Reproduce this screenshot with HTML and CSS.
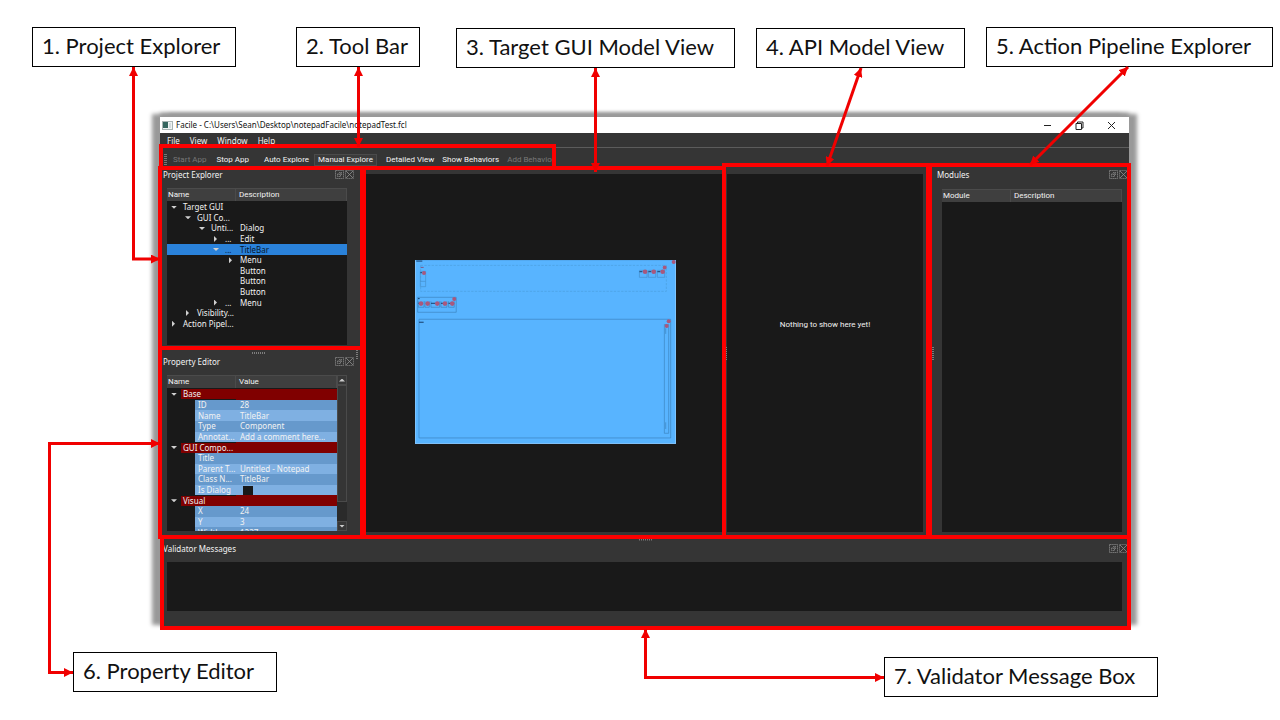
FILE: index.html
```html
<!DOCTYPE html>
<html lang="en">
<head>
<meta charset="utf-8">
<title>Facile window overview</title>
<link rel="stylesheet" href="styles.css">
</head>
<body>
<svg class="symbols" aria-hidden="true">
  <symbol id="float" viewBox="0 0 9 9"><path d="M.5 .5h8v8h-8zM4 2.500h2.500v2.500M2.500 4h3v2.500h-3zM6.500 2.500L4 5" fill="none" stroke="#858585" stroke-width=".8" stroke-dasharray="1.500 .4"/></symbol>
  <symbol id="close" viewBox="0 0 9 9"><path d="M.5 .5h8v8h-8z" fill="none" stroke="#777" stroke-width=".8" stroke-dasharray="1.500 .4"/><path d="M1 1l7 7M8 1L1 8" fill="none" stroke="#909090" stroke-width=".8"/></symbol>
</svg>
<main class="slide">
  <div class="labels top">
    <div class="label l1">1. Project Explorer</div>
    <div class="label l2">2. Tool Bar</div>
    <div class="label l3">3. Target GUI Model View</div>
    <div class="label l4">4. API Model View</div>
    <div class="label l5">5. Action Pipeline Explorer</div>
  </div>

  <section class="window">
    <header class="titlebar">
      <svg class="app-icon" viewBox="0 0 11 9"><rect x=".5" y=".5" width="10" height="8" fill="#eef3f3" stroke="#a9b4b4"/><rect x="1" y="1" width="5" height="6" fill="#35665f"/><path d="M8 2v5" stroke="#b8c2c8"/></svg>
      <h1>Facile - C:\Users\Sean\Desktop\notepadFacile\notepadTest.fcl</h1>
      <div class="controls">
        <button aria-label="Minimize"><svg viewBox="0 0 9 9"><path d="M1 4.500h7"/></svg></button>
        <button aria-label="Restore"><svg viewBox="0 0 9 9"><path d="M1 2.500h5.500v6H1zM2.500 2.500V1H8v6H6.500"/></svg></button>
        <button aria-label="Close"><svg viewBox="0 0 9 9"><path d="M1 1l7 7M8 1L1 8"/></svg></button>
      </div>
    </header>
    <nav class="menubar"><button>File</button><button>View</button><button>Window</button><button>Help</button></nav>
    <div class="toolbar">
      <i class="grip"></i>
      <button disabled>Start App</button><button class="stop">Stop App</button><button>Auto Explore</button><button class="checked">Manual Explore</button><button>Detailed View</button><button>Show Behaviors</button><button disabled>Add Behavior</button>
    </div>
    <div class="body">
      <div class="left">
        <section class="dock">
          <div class="dock-title"><h2>Project Explorer</h2><button aria-label="Float Project Explorer"><svg><use href="#float"/></svg></button><button aria-label="Close Project Explorer"><svg><use href="#close"/></svg></button></div>
          <table class="tree project">
            <thead><tr><th>Name</th><th>Description</th></tr></thead>
            <tbody>
              <tr><td class="d0 open">Target GUI</td><td></td></tr>
              <tr><td class="d1 open">GUI Co...</td><td></td></tr>
              <tr><td class="d2 open">Unti...</td><td>Dialog</td></tr>
              <tr><td class="d3 shut">...</td><td>Edit</td></tr>
              <tr class="selected"><td class="d3 open">...</td><td>TitleBar</td></tr>
              <tr><td class="d4 shut"></td><td>Menu</td></tr>
              <tr><td></td><td>Button</td></tr>
              <tr><td></td><td>Button</td></tr>
              <tr><td></td><td>Button</td></tr>
              <tr><td class="d3 shut">...</td><td>Menu</td></tr>
              <tr><td class="d1 shut">Visibility...</td><td></td></tr>
              <tr><td class="d0 shut">Action Pipel...</td><td></td></tr>
            </tbody>
          </table>
        </section>
        <i class="handle"></i>
        <section class="dock">
          <div class="dock-title"><h2>Property Editor</h2><button aria-label="Float Property Editor"><svg><use href="#float"/></svg></button><button aria-label="Close Property Editor"><svg><use href="#close"/></svg></button></div>
          <div class="property-view">
            <table class="tree properties">
              <thead><tr><th>Name</th><th>Value</th></tr></thead>
              <tbody>
                <tr class="group"><td class="d0 open"><span>Base</span></td><td></td></tr>
                <tr class="a"><td>ID</td><td>28</td></tr>
                <tr class="b"><td>Name</td><td>TitleBar</td></tr>
                <tr class="a"><td>Type</td><td>Component</td></tr>
                <tr class="b"><td>Annotat...</td><td>Add a comment here...</td></tr>
                <tr class="group"><td class="d0 open"><span>GUI Compo...</span></td><td></td></tr>
                <tr class="a"><td>Title</td><td></td></tr>
                <tr class="b"><td>Parent T...</td><td>Untitled - Notepad</td></tr>
                <tr class="a"><td>Class N...</td><td>TitleBar</td></tr>
                <tr class="b"><td><label for="dialog">Is Dialog</label></td><td><input type="checkbox" id="dialog"></td></tr>
                <tr class="group"><td class="d0 open"><span>Visual</span></td><td></td></tr>
                <tr class="a"><td>X</td><td>24</td></tr>
                <tr class="b"><td>Y</td><td>3</td></tr>
                <tr class="a"><td>Width</td><td>1237</td></tr>
              </tbody>
            </table>
            <div class="scrollbar"><button class="up" aria-label="Scroll up"></button><i></i><button class="down" aria-label="Scroll down"></button></div>
          </div>
        </section>
      </div>
      <section class="view model">
        <svg viewBox="0 0 785 553" role="img" aria-label="Target GUI model">
          <rect width="785" height="553" fill="#58b4ff"/>
          <path d="M1 0v552h783V0" fill="none" stroke="#9bd2ff" stroke-width="2"/>
          <g fill="none" stroke="#3b82bd" stroke-width="2">
            <path d="M17 16H756V94H17z" stroke-dasharray="7 4" stroke="#4c9edd"/>
            <path d="M16 34h16v46H16zM16 64h16M675 31h23v21h-23zM702 31h22v21h-22zM729 31h22v21h-22z" stroke="#4590cc"/>
            <path d="M8 112h116v45H8zM10 124v18h17v-18M30 124v18h13v-18M48 124v18h26v-18M78 124v18h18v-18M101 124v18h17v-18"/>
            <path d="M12 178h757v357H12zM750 194h13v327h-13zM754 205v17M754 488v20"/>
          </g>
          <g fill="none" stroke="#173c68" stroke-width="3"><path d="M4 3h18M675 35h9M702 35h9M729 35h9M9 116h5M12 187h14M48 130h13M78 130h7M101 130h7M10 130h5M16 38h5"/></g>
          <path d="M17 22h9" stroke="#805587" stroke-width="3"/>
          <g fill="#a9587d"><circle cx="778" cy="6" r="6"/><circle cx="751" cy="22" r="6"/><circle cx="27" cy="39" r="6"/><circle cx="692" cy="35" r="7"/><circle cx="718" cy="35" r="7"/><circle cx="745" cy="35" r="7"/><circle cx="118" cy="117" r="6"/><circle cx="18" cy="131" r="7"/><circle cx="38" cy="131" r="7"/><circle cx="67" cy="131" r="7"/><circle cx="90" cy="131" r="7"/><circle cx="112" cy="131" r="7"/><circle cx="763" cy="184" r="6"/><circle cx="757" cy="198" r="6"/></g>
        </svg>
      </section>
      <section class="view api"><p>Nothing to show here yet!</p></section>
      <section class="dock modules">
        <div class="dock-title"><h2>Modules</h2><button aria-label="Float Modules"><svg><use href="#float"/></svg></button><button aria-label="Close Modules"><svg><use href="#close"/></svg></button></div>
        <table class="tree"><thead><tr><th>Module</th><th>Description</th></tr></thead></table>
      </section>
    </div>
    <section class="dock messages">
      <div class="dock-title"><h2>Validator Messages</h2><button aria-label="Float Validator Messages"><svg><use href="#float"/></svg></button><button aria-label="Close Validator Messages"><svg><use href="#close"/></svg></button></div>
      <div class="log"></div>
    </section>
  </section>

  <div class="labels bottom">
    <div class="label l6">6. Property Editor</div>
    <div class="label l7">7. Validator Message Box</div>
  </div>

  <svg class="annotations" viewBox="0 0 1280 720" preserveAspectRatio="none" aria-hidden="true">
    <defs>
      <marker id="tip" viewBox="0 0 9 9" refX="9" refY="4.500" markerWidth="9" markerHeight="9" markerUnits="userSpaceOnUse" orient="auto-start-reverse"><path d="M0 0L9 4.500L0 9z" fill="#f00000"/></marker>
    </defs>
    <g fill="none" stroke="#7d7d7d" stroke-width="2" stroke-dasharray="1 1">
      <path d="M252 353h13M639 539.500h13"/><path d="M357 350v10M726 347v13M933 347v13"/>
    </g>
    <g fill="none" stroke="#fd0000" stroke-width="4">
      <path d="M161 146H554V168H161zM160 168H362V348H160zM160 348H362V537H160zM364 168H724V537H364zM724 165H928V537H724zM930 165H1129V537H930zM162 537H1129V628H162z"/>
    </g>
    <g class="arrows" fill="none" stroke="#f00000" stroke-width="3">
      <path d="M133.500 67V259H160"/><path d="M358.500 67V147"/><path d="M595.500 68V172"/><path d="M861 68L827 166"/><path d="M1128 67L1030 165"/><path d="M73 672.500H49.500V443.500H160"/><path d="M645.500 629V677.500H884"/>
    </g>
  </svg>
</main>
</body>
</html>
```
FILE: styles.css
```css
* { box-sizing: border-box; }
body { margin: 0; background: #fff; font-family: "Noto Sans", "Open Sans", sans-serif; }
h1, h2, p { margin: 0; font-weight: 400; }
button { padding: 0; border: 0; background: none; color: inherit; font: inherit; white-space: nowrap; }
.symbols { position: absolute; width: 0; height: 0; }
.slide { position: relative; min-height: 720px; padding-top: 27px; overflow: hidden; }

.labels { display: grid; align-items: start; }
.top { grid-template-columns: 32fr 204fr 60fr 124fr 36fr 279fr 21fr 209fr 21fr 287fr 7fr; height: 90px; }
.bottom { grid-template-columns: 73fr 204fr 607fr 274fr 122fr; padding-top: 24px; }
.label { height: 40px; min-width: 0; padding-left: 9px; border: 1px solid #000; background: #fff; color: #111; font: 22px/36px "Lato", sans-serif; white-space: nowrap; }
.l1 { grid-column: 2; }
.l2 { grid-column: 4; }
.l3 { grid-column: 6; margin-top: 1px; }
.l4 { grid-column: 8; margin-top: 1px; }
.l5 { grid-column: 10; }
.l6 { grid-column: 2; }
.l7 { grid-column: 4; margin-top: 5px; }

.window { margin: 0 151px 0 160px; background: #353535; color: #f2f2f2; font-size: 8px; line-height: 10px; box-shadow: -8px -3px 4px #999, 8px -3px 4px #999, 0 -4px 4px #999; }
.titlebar { display: flex; align-items: center; height: 16px; padding-left: 2px; background: #fff; color: #111; }
.app-icon { width: 11px; height: 9px; }
.titlebar h1 { flex: 1; padding-left: 3px; font-size: 8px; line-height: 14px; }
.controls { display: flex; gap: 24px; padding-right: 14px; }
.controls button, .controls svg { display: block; width: 9px; height: 9px; }
.controls button { width: 8px; }
.controls path { fill: none; stroke: #222; stroke-width: 1; }
.menubar { display: flex; gap: 10px; height: 15px; padding-left: 7px; border-bottom: 1px solid #5c5c5c; }
.menubar button { height: 15px; }
.toolbar { display: flex; align-items: center; height: 20px; padding: 3px 0 0 4px; font-family: Roboto, sans-serif; }
.toolbar button { height: 12px; margin-right: 8px; line-height: 10px; }
.toolbar button:disabled { color: #777; }
.toolbar .stop { margin: 0 15px 0 2px; }
.toolbar .checked { margin: 0 9px 0 -3px; padding: 0 3px; border: 1px solid #4b4b4b; background: #3b3b3b; }
.grip { width: 3px; height: 11px; margin-right: 6px; background: repeating-linear-gradient(#777 0 1px, #353535 1px 2px); }

.body { display: grid; grid-template-columns: 203fr 362fr 205fr 199fr; height: 369px; }
.left { display: flex; flex-direction: column; min-width: 0; }
.dock { display: flex; flex-direction: column; min-width: 0; padding-left: 3px; }
.dock-title { display: flex; align-items: center; gap: 1px; height: 13px; margin-bottom: 7px; padding-right: 9px; }
.dock-title h2 { flex: 1; font-size: 8px; line-height: 12px; }
.dock-title svg, .dock-title button { display: block; width: 9px; height: 9px; }
.handle { height: 10px; }

.tree { display: flex; flex-direction: column; margin: 0 16px 0 4px; background: #191919; border-collapse: collapse; overflow: hidden; }
.tree thead, .tree tbody { display: grid; flex: none; }
.tree tr { display: grid; grid-template-columns: 69px 1fr; min-height: 0; min-width: 0; }
.tree th { height: 13px; padding: 0 0 0 1px; border-right: 1px solid #4b4b4b; border-top: 1px solid #4b4b4b; background: #3f3f3f; font-family: Roboto, sans-serif; font-weight: 400; line-height: 12px; text-align: left; }
.tree th + th { padding-left: 3px; }
.tree td { display: flex; align-items: center; min-width: 0; min-height: 0; height: 100%; padding: 0; line-height: 10px; white-space: nowrap; }
.tree td + td { padding-left: 4px; }
.project { height: 157px; }
.project tbody { height: 128px; padding-top: 1px; grid-template-rows: repeat(12, minmax(0, 1fr)); }
.selected { background: #2a82da; color: #06162c; }
.tree .d0 { padding-left: 4px; }
.tree .d1 { padding-left: 18px; }
.tree .d2 { padding-left: 32px; }
.tree .d3 { padding-left: 46px; }
.tree .d4 { padding-left: 61px; }
.open::before, .shut::before { content: ""; flex: none; width: 6px; height: 3px; margin-right: 6px; background: #d0d0d0; clip-path: polygon(0 0, 100% 0, 50% 100%); }
.shut::before { width: 3px; height: 6px; margin: 0 8px 0 1px; clip-path: polygon(0 0, 100% 50%, 0 100%); }

.property-view { display: flex; height: 156px; margin: 0 16px 0 4px; background: #191919; overflow: hidden; }
.properties { flex: 1; margin: 0; overflow: visible; }
.properties tbody { height: 150px; padding-top: 1px; grid-template-rows: repeat(14, minmax(0, 1fr)); }
.group td + td { background: #800000; }
.group span { flex: 1; margin-left: -2px; padding-left: 2px; background: #800000; }
.a td, .b td { background: #6699cc; }
.b td { background: #7fb0e2; }
.a td:first-child, .b td:first-child { margin-left: 28px; padding-left: 3px; }
.tree input { appearance: none; width: 10px; height: 9px; margin: 0 0 0 3px; background: #191919; }
.scrollbar { display: flex; flex-direction: column; width: 10px; background: #2a2a2a; }
.scrollbar button { height: 10px; border: 1px solid #4a4a4a; background: #373737; }
.scrollbar button::before { content: ""; display: block; width: 6px; height: 3px; margin: auto; background: #ccc; clip-path: polygon(50% 0, 100% 100%, 0 100%); }
.scrollbar .down::before { clip-path: polygon(0 0, 100% 0, 50% 100%); }
.scrollbar i { height: 117px; margin-bottom: auto; border: 1px solid #4a4a4a; background: #353535; }

.view { display: flex; align-items: center; justify-content: center; margin: 6px 3px 5px; background: #191919; }
.model { padding: 0 0 2px 2px; }
.model svg { width: 261px; height: 184px; }
.api { margin: 6px 7px 5px 2px; }
.api p { padding-bottom: 56px; font-family: Roboto, sans-serif; }
.modules { padding-left: 7px; }
.modules .dock-title { padding-right: 1px; margin-bottom: 8px; }
.modules .tree { flex: 1; margin: 0 7px 5px 5px; }
.modules .tree tr { grid-template-columns: 69px 1fr; }
.messages { padding: 5px 0 0; height: 91px; }
.messages .dock-title { padding: 0 1px 0 3px; }
.messages .log { height: 49px; margin: 0 7px; background: #191919; }

.annotations { position: absolute; inset: 0; width: 100%; height: 720px; pointer-events: none; }
.arrows path { marker-start: url(#tip); marker-end: url(#tip); }
```
